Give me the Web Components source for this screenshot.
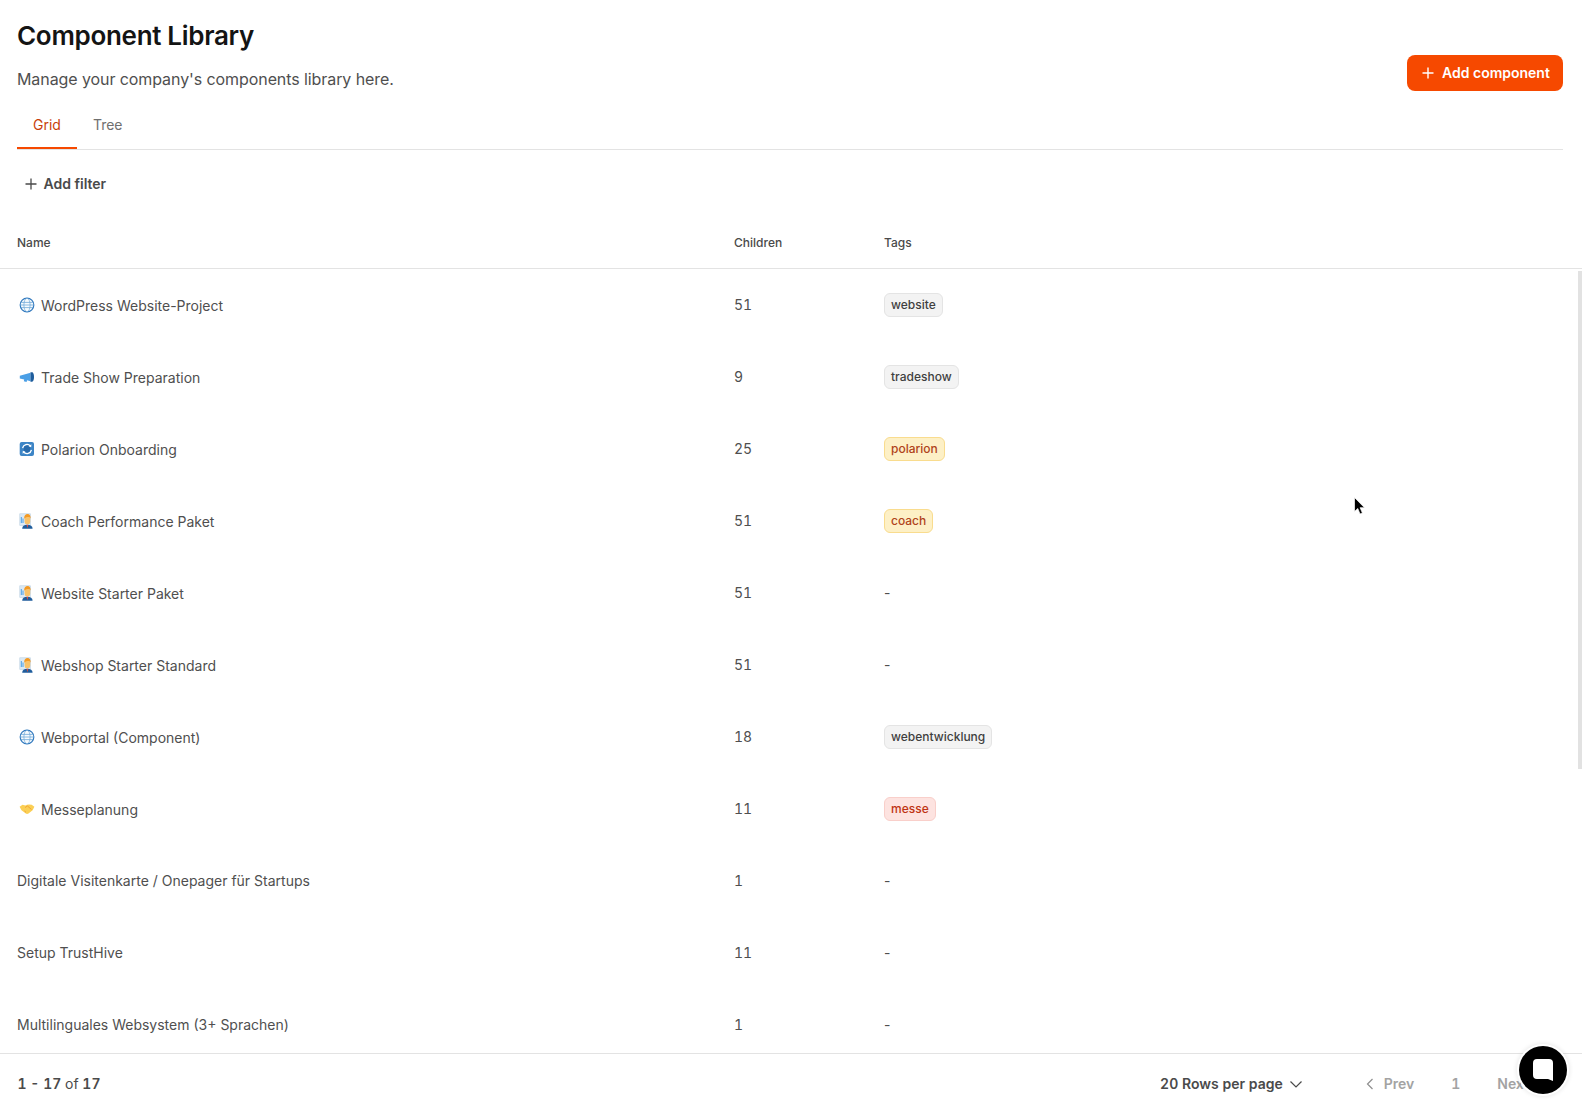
<!DOCTYPE html>
<html lang="en"><head><meta charset="utf-8"><title>Component Library</title>
<style>
html,body{margin:0;height:100%;background:#fff;overflow:hidden}
body{font-family:Inter,"Liberation Sans",sans-serif;color:#4a4a4a}
</style></head><body>
<svg width="0" height="0" style="position:absolute">
<defs>
<symbol id="globe" viewBox="0 0 16 16"><circle cx="8" cy="8" r="6.800" fill="#f6fafd" stroke="#3178bd" stroke-width="1.200"/><ellipse cx="8" cy="8" rx="3.100" ry="6.800" fill="none" stroke="#7fb3de" stroke-width=".8"/><path d="M1.800 5.400h12.400M1.800 10.600h12.400M1.300 8h13.400" stroke="#6fa8d8" stroke-width=".8" fill="none"/></symbol>
<symbol id="mega" viewBox="0 0 16 16"><path d="M.8 6.800 11.500 3.800v8.400L8 11.200l-.4 1.700-2.800-.7.4-1.800L.8 9.400z" fill="#4a9fe6"/><path d="M11.500 3.300h1.600c1.200 0 1.900 2.100 1.900 4.700s-.7 4.700-1.900 4.700h-1.600z" fill="#1f5d9c"/></symbol>
<symbol id="sync" viewBox="0 0 16 16"><rect x=".7" y="1" width="14.300" height="14" rx="2" fill="#3d85c6"/><circle cx="8" cy="8" r="3.400" fill="#2a6bab"/><path d="M3.600 7.200A4.500 4.500 0 0 1 11.400 5M12.400 8.800A4.500 4.500 0 0 1 4.600 11" fill="none" stroke="#fff" stroke-width="1.300"/><path d="m12.400 3.200-.2 3-2.600-.9zM3.600 12.800l.2-3 2.600.9z" fill="#fff"/></symbol>
<symbol id="coach" viewBox="0 0 16 16"><rect x=".8" y=".8" width="10.500" height="11.500" fill="#dbe9f5" stroke="#b9cfe2" stroke-width=".6"/><path d="M2.300 4v6M4 5.500V10" stroke="#4a9fe6" stroke-width="1"/><path d="M3.200 15.800c0-2.900 1.800-4 5.100-4s5.300 1.100 5.300 4z" fill="#1f5d9c"/><path d="m7.500 11.800.9 3.500.9-3.500z" fill="#e04f3f"/><rect x="5.600" y="3.600" width="5.600" height="7.600" rx="2.200" fill="#f8c26a"/><path d="M5.200 5.800C4.800 2.600 6.600 1 8.600 1s3.300 1.600 3 4.800c-.5-1.200-1.200-1.700-2.200-1.700S6 4.500 5.200 5.800z" fill="#f49a24"/></symbol>
<symbol id="shake" viewBox="0 0 16 16"><path d="M.6 5.800 3.500 3.800l3 .6L8 3.800l2-.3 2.700.3 2.700 2-1.800 3.400-4.100 3.400c-1 .7-2 .6-2.700 0L2.500 9.200z" fill="#fbcf55"/><path d="M6 6.500 8.500 5l4 3.500M5.500 10l1.500 1.300" stroke="#ee9b2d" stroke-width=".8" fill="none"/></symbol>
</defs></svg>

<template id="t-header"><style>
:host{display:flex;justify-content:space-between;align-items:flex-end;padding:19px 19px 0 17px;flex:none}
h1{margin:0;font:600 26px/34px Inter,"Liberation Sans",sans-serif;color:#141414;letter-spacing:-.3px}
p{margin:14px 0 0;font:400 16px/24px Inter,"Liberation Sans",sans-serif;color:#4f4f4f;letter-spacing:-.085px}
button{all:unset;display:flex;align-items:center;gap:7px;height:36px;width:156px;box-sizing:border-box;padding-left:14px;background:#f64900;border-radius:8px;color:#fff;font:600 14px/20px Inter,"Liberation Sans",sans-serif}
</style><div><h1><slot name="title"></slot></h1><p><slot name="sub"></slot></p></div>
<button><svg width="14" height="14" viewBox="0 0 14 14"><path d="M7 1.500v11M1.500 7h11" stroke="#fff" stroke-width="1.400" fill="none"/></svg><slot name="action"></slot></button></template>

<template id="t-tabs"><style>
:host{display:flex;margin:12px 19px 0 17px;height:46px;border-bottom:1px solid #e3e3e3;flex:none;box-sizing:content-box}
</style><slot></slot></template>

<template id="t-tab"><style>
:host{display:flex;align-items:center;padding:0 16px;height:46px;margin-bottom:-1px;font:400 14px/20px Inter,"Liberation Sans",sans-serif;color:#6f6f6f;box-sizing:border-box;border-bottom:2px solid transparent}
:host([active]){color:#c83f0b;border-bottom-color:#f64900}
</style><slot></slot></template>

<template id="t-filter"><style>
:host{display:flex;align-items:center;gap:7px;padding:0 0 2px 24.500px;height:67px;flex:none;font:600 14px/20px Inter,"Liberation Sans",sans-serif;color:#4a4a4a}
</style><svg width="12" height="12" viewBox="0 0 12 12"><path d="M6 .5v11M.5 6h11" stroke="#4a4a4a" stroke-width="1.300" fill="none"/></svg><slot></slot></template>

<template id="t-table"><style>
:host{display:flex;flex-direction:column;flex:1;min-height:0;overflow:hidden;position:relative}
.scroll{position:absolute;right:0;top:52px;width:4px;height:498px;background:#e2e2e2}
</style><slot></slot><div class="scroll"></div></template>

<template id="t-row"><style>
:host{display:grid;grid-template-columns:717px 150px 1fr;padding-left:17px;height:72px;align-items:center;flex:none;font:400 14px/20px Inter,"Liberation Sans",sans-serif;color:#4f4f4f}
:host([head]){height:47px;padding-bottom:2px;border-bottom:1px solid #e3e3e3;font:500 12px/16px Inter,"Liberation Sans",sans-serif;color:#4a4a4a;box-sizing:content-box}
.n{display:flex;align-items:center;gap:6px;position:relative}
:host([ic]) .n{top:1px}
.c{font-variant-numeric:tabular-nums}
</style><div class="n"><slot name="icon"></slot><slot name="name"></slot></div><div class="c"><slot name="count"></slot></div><div><slot name="tags"></slot></div></template>

<template id="t-tag"><style>
:host{display:inline-flex;align-items:center;height:24px;box-sizing:border-box;padding:0 6px;border-radius:6px;border:1px solid #e4e4e4;background:#f3f3f3;color:#3f3f3f;font:500 12px/16px Inter,"Liberation Sans",sans-serif}
:host([tone=amber]){background:#fdf0c6;border-color:#f9dc8e;color:#b0431a}
:host([tone=red]){background:#fde3e0;border-color:#f9cfca;color:#bf3413}
</style><slot></slot></template>

<template id="t-footer"><style>
:host{display:flex;align-items:center;height:45px;padding:7px 0 0 17.500px;flex:none;border-top:1px solid #e3e3e3;font:400 14px/20px Inter,"Liberation Sans",sans-serif;color:#4a4a4a;position:relative;background:#fff;font-variant-numeric:tabular-nums}
.sp{flex:1}
.rows{display:flex;align-items:center;gap:6px;font-weight:600;margin-right:62px}
.pg{display:flex;align-items:center;font-weight:600;color:#a3a3a3}
.pg span{display:inline-block}
</style><slot name="range"></slot><div class="sp"></div><div class="rows"><slot name="rows"></slot><svg width="14" height="14" viewBox="0 0 14 14"><path d="m1.500 4.500 5.500 5.500 5.500-5.500" fill="none" stroke="#4a4a4a" stroke-width="1.200"/></svg></div>
<div class="pg"><svg width="10" height="14" viewBox="0 0 10 14" style="margin-right:9px"><path d="M7.500 2 2.500 7l5 5" fill="none" stroke="#8f8f8f" stroke-width="1.200"/></svg><slot name="prev"></slot><span style="width:83px;text-align:center"><slot name="page"></slot></span><slot name="next"></slot><svg width="10" height="14" viewBox="0 0 10 14" style="margin:0 34px 0 9px"><path d="M2.500 2l5 5-5 5" fill="none" stroke="#8f8f8f" stroke-width="1.200"/></svg></div></template>

<template id="t-chat"><style>
:host{position:absolute;left:1519px;top:1046px;width:48px;height:48px;border-radius:50%;background:#000;box-shadow:0 0 0 2px #fff,0 0 4px 3px rgba(0,0,0,.08);display:flex;align-items:center;justify-content:center}
</style><svg width="22" height="24" viewBox="0 0 22 24"><path d="M5 1h12a4 4 0 0 1 4 4v18l-5-2H5a4 4 0 0 1-4-4V5a4 4 0 0 1 4-4z" fill="#fff"/></svg></template>

<template id="t-cursor"><style>
:host{position:absolute;left:1354px;top:497px;width:12px;height:20px;display:block}
</style><svg width="12" height="20" viewBox="0 0 12 20"><path d="M.500.500v14l3.300-3 2.200 5.500 2.400-1-2.300-5.300h4.400z" fill="#000" stroke="#fff" stroke-width=".7"/></svg></template>

<template id="t-page"><style>
:host{display:flex;flex-direction:column;height:1106px;width:1582px;overflow:hidden;position:relative}
</style><slot></slot></template>

<x-page>
 <x-header><span slot="title">Component Library</span><span slot="sub">Manage your company's components library here.</span><span slot="action">Add component</span></x-header>
 <x-tabs><x-tab active>Grid</x-tab><x-tab>Tree</x-tab></x-tabs>
 <x-filter>Add filter</x-filter>
 <x-table>
  <x-row head><span slot="name">Name</span><span slot="count">Children</span><span slot="tags">Tags</span></x-row>
  <x-row ic><svg slot="icon" width="16" height="16" style="margin:-2px 0 0 2px"><use href="#globe"/></svg><span slot="name">WordPress Website-Project</span><span slot="count">51</span><x-tag slot="tags">website</x-tag></x-row>
  <x-row ic><svg slot="icon" width="16" height="16" style="margin:-2px 0 0 2px"><use href="#mega"/></svg><span slot="name">Trade Show Preparation</span><span slot="count">9</span><x-tag slot="tags">tradeshow</x-tag></x-row>
  <x-row ic><svg slot="icon" width="16" height="16" style="margin:-2px 0 0 2px"><use href="#sync"/></svg><span slot="name">Polarion Onboarding</span><span slot="count">25</span><x-tag slot="tags" tone="amber">polarion</x-tag></x-row>
  <x-row ic><svg slot="icon" width="16" height="16" style="margin:-2px 0 0 2px"><use href="#coach"/></svg><span slot="name">Coach Performance Paket</span><span slot="count">51</span><x-tag slot="tags" tone="amber">coach</x-tag></x-row>
  <x-row ic><svg slot="icon" width="16" height="16" style="margin:-2px 0 0 2px"><use href="#coach"/></svg><span slot="name">Website Starter Paket</span><span slot="count">51</span><span slot="tags">-</span></x-row>
  <x-row ic><svg slot="icon" width="16" height="16" style="margin:-2px 0 0 2px"><use href="#coach"/></svg><span slot="name">Webshop Starter Standard</span><span slot="count">51</span><span slot="tags">-</span></x-row>
  <x-row ic><svg slot="icon" width="16" height="16" style="margin:-2px 0 0 2px"><use href="#globe"/></svg><span slot="name">Webportal (Component)</span><span slot="count">18</span><x-tag slot="tags">webentwicklung</x-tag></x-row>
  <x-row ic><svg slot="icon" width="16" height="16" style="margin:-2px 0 0 2px"><use href="#shake"/></svg><span slot="name">Messeplanung</span><span slot="count">11</span><x-tag slot="tags" tone="red">messe</x-tag></x-row>
  <x-row><span slot="name">Digitale Visitenkarte / Onepager für Startups</span><span slot="count">1</span><span slot="tags">-</span></x-row>
  <x-row><span slot="name">Setup TrustHive</span><span slot="count">11</span><span slot="tags">-</span></x-row>
  <x-row><span slot="name">Multilinguales Websystem (3+ Sprachen)</span><span slot="count">1</span><span slot="tags">-</span></x-row>
 </x-table>
 <x-footer><span slot="range"><b style="font-weight:600">1 - 17</b> of <b style="font-weight:600">17</b></span><span slot="rows">20 Rows per page</span><span slot="prev">Prev</span><span slot="page">1</span><span slot="next">Next</span></x-footer>
 <x-cursor></x-cursor>
 <x-chat></x-chat>
</x-page>
<script>
for (const [tag,id] of [['x-page','t-page'],['x-header','t-header'],['x-tabs','t-tabs'],['x-tab','t-tab'],['x-filter','t-filter'],['x-table','t-table'],['x-row','t-row'],['x-tag','t-tag'],['x-footer','t-footer'],['x-chat','t-chat'],['x-cursor','t-cursor']]) {
  customElements.define(tag, class extends HTMLElement {
    constructor(){super();this.attachShadow({mode:'open'}).appendChild(document.getElementById(id).content.cloneNode(true));}
  });
}
</script>
</body></html>
